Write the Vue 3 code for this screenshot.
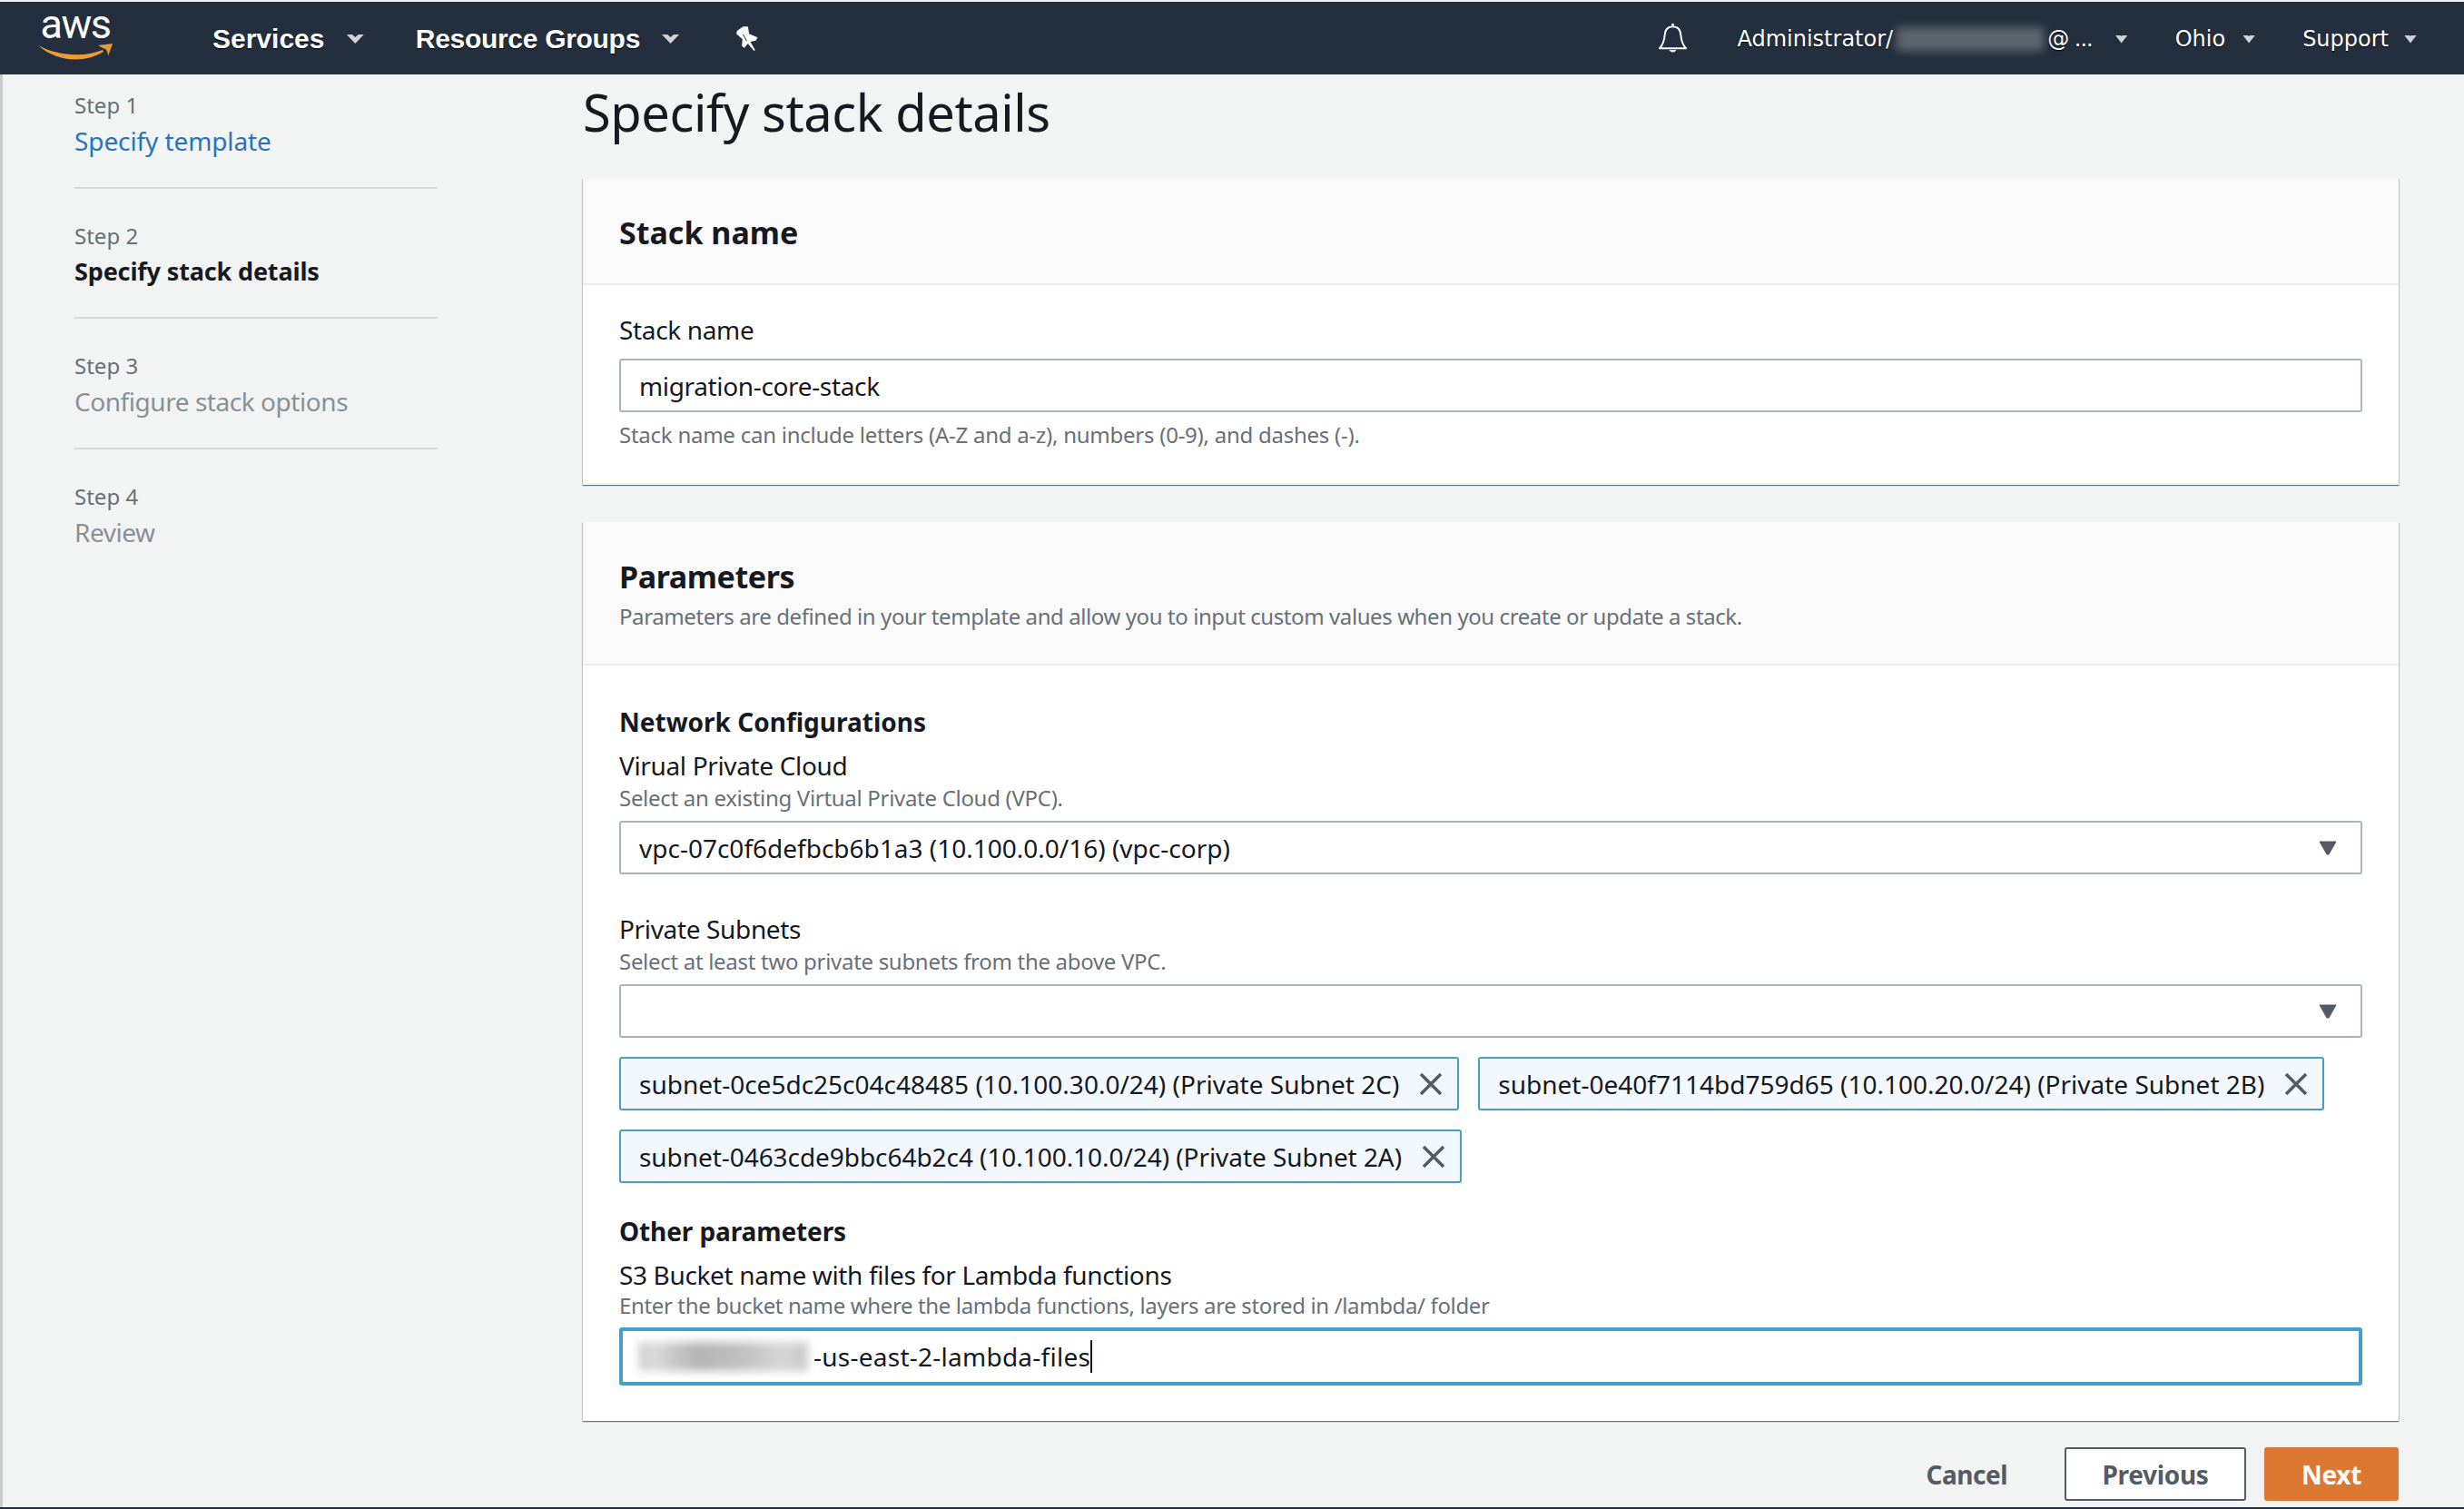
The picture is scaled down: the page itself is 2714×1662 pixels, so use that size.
<template>
  <div class="page">
    <header class="nav">
      <div class="logo">
        <span class="logo-text">aws</span>
        <svg class="smile" viewBox="0 0 84 20" width="84" height="20">
          <path d="M1 3 C22 14 50 17 72 8 L73 10 C50 24 20 20 1 3 Z" fill="#ec9c34" />
          <path d="M67 3 L83 1 L78 15 C78 12 77 8 75 7 C73 6 70 5 67 3 Z" fill="#ec9c34" />
        </svg>
      </div>
      <div class="nav-menu services">Services <span class="caret"></span></div>
      <div class="nav-menu groups">Resource Groups <span class="caret"></span></div>
      <svg class="pin" viewBox="60 35 80 90" width="27" height="30">
        <path d="M88 42 L104 42 L108 66 L136 78 L130 88 L112 92 L128 120 L124 122 L104 98 L92 112 L84 106 L86 84 L66 66 L68 56 Z" fill="#fff" />
        <path d="M88 68 L100 90" stroke="#232f3e" stroke-width="3" />
      </svg>
      <div class="nav-right">
        <svg class="bell" viewBox="40 30 100 105" width="33" height="35">
          <path d="M46 115 C60 100 62 85 63 72 C64 52 75 42 90 42 C105 42 116 52 117 72 C118 85 120 100 134 115 Z" fill="none" stroke="#fff" stroke-width="6" stroke-linejoin="round" />
          <circle cx="90" cy="36" r="4" fill="#fff" />
          <path d="M78 120 C84 131 96 131 102 120 Z" fill="#e8e8e8" />
        </svg>
        <div class="acct">
          <span>Administrator/</span><span class="blur-name"></span><span class="at">@ ...</span><span class="caret small"></span>
        </div>
        <div class="acct region"><span>Ohio</span><span class="caret small"></span></div>
        <div class="acct support"><span>Support</span><span class="caret small"></span></div>
      </div>
    </header>

    <div class="body">
      <aside class="steps">
        <div v-for="(s, i) in steps" :key="s.name" class="step">
          <div class="step-num">Step {{ i + 1 }}</div>
          <div class="step-name" :class="s.kind">{{ s.name }}</div>
        </div>
      </aside>

      <main class="main">
        <h1 class="title">Specify stack details</h1>

        <section class="card first">
          <div class="card-head stack-head"><h2>Stack name</h2></div>
          <div class="card-body stack-body">
            <div class="label">Stack name</div>
            <div class="input name-input">migration-core-stack</div>
            <div class="help after">Stack name can include letters (A-Z and a-z), numbers (0-9), and dashes (-).</div>
          </div>
        </section>

        <section class="card second">
          <div class="card-head params-head">
            <h2>Parameters</h2>
            <div class="help">Parameters are defined in your template and allow you to input custom values when you create or update a stack.</div>
          </div>
          <div class="card-body params-body">
            <h3>Network Configurations</h3>
            <div class="label gap-s">Virual Private Cloud</div>
            <div class="help">Select an existing Virtual Private Cloud (VPC).</div>
            <div class="input select">
              <span>vpc-07c0f6defbcb6b1a3 (10.100.0.0/16) (vpc-corp)</span>
              <svg viewBox="0 0 20 16" width="20" height="16"><path d="M1 1 H19 L11 15 H9 Z" fill="#545b64" stroke="#545b64" stroke-linejoin="round" /></svg>
            </div>

            <div class="label gap-l">Private Subnets</div>
            <div class="help">Select at least two private subnets from the above VPC.</div>
            <div class="input select">
              <span></span>
              <svg viewBox="0 0 20 16" width="20" height="16"><path d="M1 1 H19 L11 15 H9 Z" fill="#545b64" stroke="#545b64" stroke-linejoin="round" /></svg>
            </div>
            <div class="chips">
              <div v-for="c in subnets" :key="c" class="chip">
                <span>{{ c }}</span>
                <svg viewBox="0 0 26 26" width="26" height="26"><path d="M2 2 L24 24 M24 2 L2 24" stroke="#545b64" stroke-width="3.5" /></svg>
              </div>
            </div>

            <h3 class="other">Other parameters</h3>
            <div class="label gap-s">S3 Bucket name with files for Lambda functions</div>
            <div class="help tight">Enter the bucket name where the lambda functions, layers are stored in /lambda/ folder</div>
            <div class="input focused">
              <span class="blur-bucket"></span><span class="typed">-us-east-2-lambda-files</span>
            </div>
          </div>
        </section>

        <div class="actions">
          <span class="cancel">Cancel</span>
          <button class="btn prev">Previous</button>
          <button class="btn next">Next</button>
        </div>
      </main>
    </div>
    <div class="bottom-line"></div>
  </div>
</template>

<script setup>
const steps = [
  { name: "Specify template", kind: "link" },
  { name: "Specify stack details", kind: "current" },
  { name: "Configure stack options", kind: "off" },
  { name: "Review", kind: "off" },
];

const subnets = [
  "subnet-0ce5dc25c04c48485 (10.100.30.0/24) (Private Subnet 2C)",
  "subnet-0e40f7114bd759d65 (10.100.20.0/24) (Private Subnet 2B)",
  "subnet-0463cde9bbc64b2c4 (10.100.10.0/24) (Private Subnet 2A)",
];
</script>

<style>
html, body {
  margin: 0;
  background: #f2f3f3;
}
</style>

<style scoped>
.page {
  height: 1662px;
  overflow: hidden;
  display: flex;
  flex-direction: column;
  background: #f2f3f3;
  font-family: "Noto Sans", sans-serif;
  color: #16191f;
  font-size: 28px;
}

.nav {
  margin-top: 2px;
  height: 80px;
  flex: none;
  background: #232f3e;
  color: #fff;
  display: flex;
  align-items: center;
}
.logo {
  width: 84px;
  margin-left: 41px;
  align-self: flex-start;
  padding-top: 3px;
  display: flex;
  flex-direction: column;
  align-items: center;
}
.logo-text {
  font-family: "Roboto", sans-serif;
  font-size: 45px;
  line-height: 44px;
  letter-spacing: -1.5px;
}
.smile {
  display: block;
  margin-top: -2px;
}
.nav-menu {
  font-family: "Liberation Sans", sans-serif;
  font-weight: 700;
  font-size: 30px;
  text-shadow: 0 1px 1px #000;
  display: flex;
  align-items: center;
  white-space: pre;
  margin-top: 2px;
}
.services { margin-left: 109px; }
.groups {
  margin-left: 57px;
  letter-spacing: -0.3px;
}
.caret {
  width: 19px;
  height: 10px;
  background: #d0d2d4;
  clip-path: polygon(0 0, 32% 0, 50% 30%, 68% 0, 100% 0, 50% 100%);
  margin-left: 16px;
}
.caret.small {
  width: 14px;
  height: 9px;
  clip-path: polygon(0 0, 35% 0, 50% 15%, 65% 0, 100% 0, 50% 100%);
  margin-left: 25px;
}
.pin { margin-left: 61px; }
.nav-right {
  margin-left: auto;
  display: flex;
  align-items: center;
  font-family: "DejaVu Sans", sans-serif;
  font-size: 24px;
  padding-right: 52px;
}
.acct {
  display: flex;
  align-items: center;
  white-space: pre;
  text-shadow: 0 1px 1px #000;
  margin-top: 2px;
}
.bell { margin-right: 54px; }
.blur-name {
  width: 162px;
  height: 26px;
  background: #5d656f;
  filter: blur(5px);
  margin: 0 4px;
}
.at { letter-spacing: -1px; }
.region { margin-left: 52px; }
.region .caret { margin-left: 19px; }
.support { margin-left: 52px; }
.support .caret { margin-left: 17px; }

.body {
  flex: 1;
  min-height: 0;
  display: flex;
  border-left: 3px solid #c9cccc;
}
.steps {
  width: 400px;
  margin-left: 79px;
  padding-top: 18px;
  flex: none;
}
.step {
  height: 143.5px;
  box-sizing: border-box;
  padding-top: 36px;
  border-bottom: 2px solid #d5dbdb;
}
.step:first-child {
  height: 107.5px;
  padding-top: 0;
}
.step:last-child { border-bottom: none; }
.step-num {
  font-size: 24px;
  line-height: 32px;
  color: #687078;
}
.step-name {
  font-size: 28px;
  line-height: 40px;
  margin-top: 3px;
}
.step-name.link {
  color: #2a73bb;
  letter-spacing: -0.1px;
}
.step-name.current {
  font-weight: 700;
  font-size: 27px;
  letter-spacing: -0.15px;
}
.step-name.off {
  color: #879196;
  letter-spacing: -0.45px;
}

.main {
  width: 2000px;
  margin-left: 160px;
  flex: none;
}
.title {
  margin: 0;
  height: 114px;
  padding-top: 3px;
  box-sizing: border-box;
  font-size: 56px;
  line-height: 76px;
  font-weight: 400;
  letter-spacing: -0.43px;
}
.card {
  background: #fff;
  box-shadow: 0 1px 1px 0 rgba(0, 28, 36, 0.4), 1px 1px 1px 0 rgba(0, 28, 36, 0.15), -1px 1px 1px 0 rgba(0, 28, 36, 0.15);
}
.card-head {
  background: #fafafa;
  border-bottom: 2px solid #eaeded;
  padding: 0 40px;
  box-sizing: border-box;
}
.card-head h2 {
  margin: 0;
  font-size: 34px;
  line-height: 48px;
  font-weight: 700;
}
.stack-head {
  height: 118px;
  padding-top: 36px;
}
.params-head {
  height: 158px;
  padding-top: 36px;
}
.params-head h2 { letter-spacing: -0.4px; }
.params-head .help {
  margin-top: 4px;
  letter-spacing: -0.41px;
}
.card-body { padding: 0 40px; }
.stack-body {
  height: 220px;
  padding-top: 31px;
  box-sizing: border-box;
}
.params-body {
  padding-top: 42px;
  padding-bottom: 39px;
}
.second { margin-top: 41px; }
h3 {
  margin: 0;
  font-size: 28px;
  line-height: 40px;
  font-weight: 700;
}
.label {
  font-size: 28px;
  line-height: 36px;
  letter-spacing: -0.35px;
}
.gap-s { margin-top: 10px; }
.gap-l { margin-top: 42px; }
.help {
  font-size: 24px;
  line-height: 32px;
  color: #687078;
  margin-top: 2px;
  letter-spacing: -0.3px;
}
.help.tight {
  margin-top: 0;
  letter-spacing: -0.36px;
}
.help.after {
  margin-top: 9px;
  letter-spacing: -0.25px;
}
.input {
  height: 59px;
  box-sizing: border-box;
  border: 2px solid #aab7b8;
  border-radius: 3px;
  background: #fff;
  padding: 0 20px;
  display: flex;
  align-items: center;
  margin-top: 9px;
  font-size: 28px;
}
.name-input {
  margin-top: 14px;
  letter-spacing: -0.35px;
}
.select {
  justify-content: space-between;
  padding-right: 26px;
}
.chips {
  display: flex;
  flex-wrap: wrap;
  gap: 21px 21px;
  margin-top: 21px;
}
.chip {
  height: 59px;
  box-sizing: border-box;
  border: 2px solid #44a0c8;
  border-radius: 3px;
  background: #f2f8fd;
  padding: 0 16px 0 20px;
  display: flex;
  align-items: center;
  gap: 22px;
  font-size: 28px;
}
.chip:nth-child(3) { letter-spacing: -0.06px; }
.other {
  margin-top: 33px;
  letter-spacing: -0.1px;
}
.focused {
  height: 64px;
  border: 4px solid #44a0c8;
  padding: 0 18px;
  margin-top: 8px;
}
.blur-bucket {
  width: 186px;
  height: 32px;
  flex: none;
  background: linear-gradient(90deg, #c4c4c4, #dedede 6%, #b4b4b4 35%, #c0c0c0 60%, #d6d6d6 85%, #c8c8c8);
  filter: blur(5px);
  margin-right: 6px;
}
.typed {
  border-right: 2px solid #16191f;
  line-height: 36px;
  letter-spacing: 0.25px;
}
.actions {
  margin-top: 29px;
  display: flex;
  justify-content: flex-end;
  align-items: center;
}
.cancel {
  font-weight: 700;
  color: #545b64;
  margin-right: 63px;
  letter-spacing: -0.5px;
}
.btn {
  height: 59px;
  box-sizing: border-box;
  border-radius: 3px;
  font-family: "Noto Sans", sans-serif;
  font-size: 28px;
  font-weight: 700;
  letter-spacing: -0.3px;
  cursor: pointer;
}
.prev {
  width: 200px;
  background: #fff;
  border: 2px solid #545b64;
  color: #545b64;
}
.next {
  width: 148px;
  margin-left: 20px;
  background: #dd7833;
  border: none;
  color: #fff;
}
.bottom-line {
  height: 2px;
  flex: none;
  background: #232f3e;
}
</style>
